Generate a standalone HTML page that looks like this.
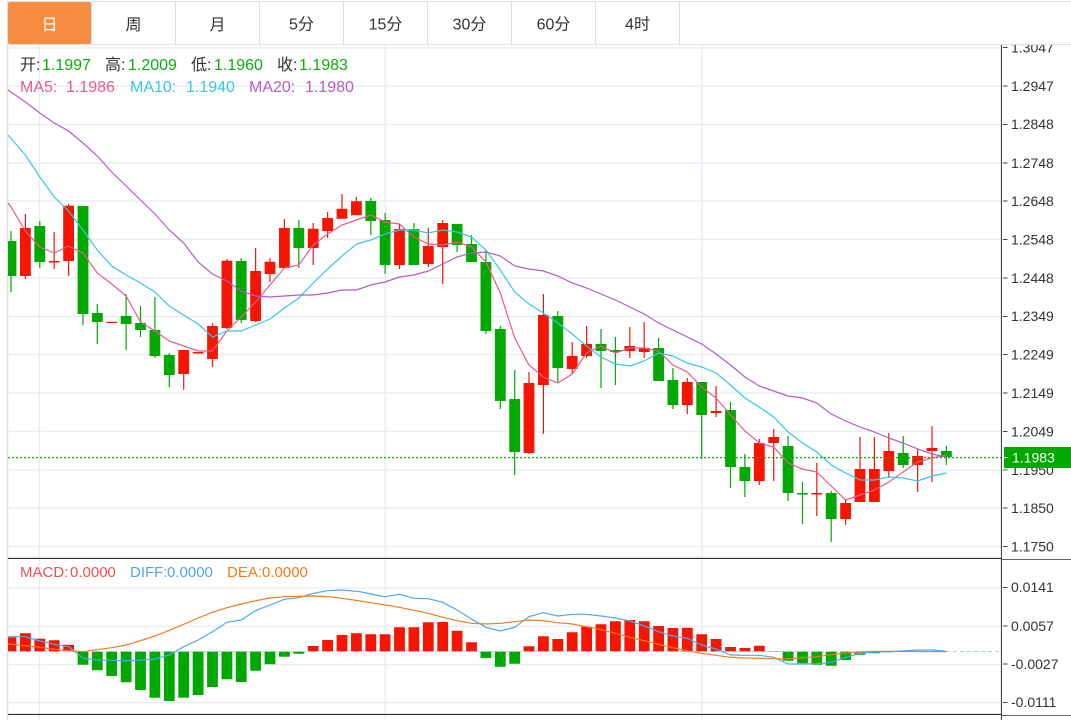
<!DOCTYPE html>
<html><head><meta charset="utf-8"><style>
html,body{margin:0;padding:0;background:#fff;width:1071px;height:720px;overflow:hidden}
svg{display:block;font-family:"Liberation Sans","Noto Sans CJK SC",sans-serif}
.ax{font-size:14px;fill:#333}
.tab{font-size:16px;fill:#333;text-anchor:middle}
.h{font-size:16px}
.m{font-size:15px}
</style></head><body>
<svg width="1071" height="720" viewBox="0 0 1071 720" xmlns="http://www.w3.org/2000/svg">
<defs><clipPath id="c"><rect x="8" y="45" width="993" height="675"/></clipPath></defs>
<rect width="1071" height="720" fill="#fff"/>
<!-- grid -->
<path d="M8 48H1001M8 86H1001M8 124.5H1001M8 163H1001M8 201H1001M8 239.5H1001M8 278H1001M8 316.5H1001M8 354.5H1001M8 393H1001M8 431.5H1001M8 470H1001M8 508H1001M8 546.5H1001M8 588H1001M8 626.5H1001M8 664.5H1001M8 702.5H1001" stroke="#e7eff5" stroke-width="1.4" fill="none"/>
<path d="M39.5 45V558M39.5 560V720M385.3 45V558M385.3 560V720M701.7 45V558M701.7 560V720" stroke="#e6eef4" stroke-width="1.4" fill="none"/>
<path d="M7.5 45V720" stroke="#e0e0e0" stroke-width="1.5"/>
<g clip-path="url(#c)">
<!-- wicks -->
<path fill="none" stroke="#f51500" stroke-width="1.2" d="M25.4 214V279M54.2 232V269M68.6 204V276M183.7 350V390M212.5 323V367M226.9 259V329M255.6 248V322M270 258V282M284.4 219V228M313.2 223V265M327.6 212V238M342 194V209M356.4 197V202M399.5 224V269M428.3 228V267M442.7 220V284M529 372V454M543.4 294V434M572.2 342V374M586.6 326V358M629.8 327V358M644.2 322V358M687.3 378V414M716.1 386V417M759.3 439V485M773.7 429V481M816.8 463V516M845.6 499V525M860 437V502M874.4 437V502M888.8 433V478M917.6 449V492M932 426V482"/>
<path fill="none" stroke="#00a800" stroke-width="1.2" d="M11 231V292M39.8 221V268M83 206V325M97.3 304V344M126.1 294V350M140.5 306V337M154.9 297V358M169.3 353V387M241.2 258V323M298.8 220V268M370.8 198V235M385.1 213V274M413.9 223V265M457.1 224V252M471.5 235V262M485.9 250V334M500.3 326V409M514.7 370V475M557.8 311V382M601 329V388M615.4 337V385M658.6 338V381M672.9 368V409M701.7 382V459M730.5 402V488M744.9 454V497M788.1 436V501M802.5 482V524M831.2 491V542M903.2 436V468M946.4 446V465"/>
<!-- red bodies -->
<path fill="#f51500" d="M20 228h10.8V276h-10.8zM48.8 261h10.8V262.5h-10.8zM63.2 205.7h10.8V261h-10.8zM106.3 321.7h10.8V323h-10.8zM178.3 350h10.8V374h-10.8zM192.7 352h10.8V353.5h-10.8zM207.1 326h10.8V359h-10.8zM221.5 260.7h10.8V328h-10.8zM250.2 271h10.8V321h-10.8zM264.6 261.7h10.8V274h-10.8zM279 228h10.8V268h-10.8zM307.8 228.7h10.8V248h-10.8zM322.2 218h10.8V231h-10.8zM336.6 208.7h10.8V218.7h-10.8zM351 201.3h10.8V215.3h-10.8zM394.1 229h10.8V265h-10.8zM422.9 246h10.8V264h-10.8zM437.3 223h10.8V247h-10.8zM523.6 383h10.8V453h-10.8zM538 315h10.8V385h-10.8zM566.8 356h10.8V369h-10.8zM581.2 344h10.8V356h-10.8zM624.4 346h10.8V351h-10.8zM638.8 348h10.8V352h-10.8zM681.9 382h10.8V405h-10.8zM710.7 411h10.8V413h-10.8zM753.9 443h10.8V481h-10.8zM768.3 437h10.8V443h-10.8zM811.4 493h10.8V494.5h-10.8zM840.2 503h10.8V519h-10.8zM854.6 469h10.8V502h-10.8zM869 469h10.8V502h-10.8zM883.4 451h10.8V471h-10.8zM912.2 456h10.8V465h-10.8zM926.6 448h10.8V451h-10.8z"/>
<!-- green bodies -->
<path fill="#00a800" d="M5.6 241h10.8V276h-10.8zM34.4 226h10.8V262h-10.8zM77.6 206h10.8V314h-10.8zM91.9 313h10.8V322h-10.8zM120.7 316h10.8V324h-10.8zM135.1 323h10.8V330h-10.8zM149.5 330h10.8V356h-10.8zM163.9 355h10.8V375h-10.8zM235.8 261h10.8V320h-10.8zM293.4 228h10.8V248h-10.8zM365.4 201h10.8V221h-10.8zM379.7 220h10.8V265h-10.8zM408.5 229h10.8V265h-10.8zM451.7 224h10.8V245h-10.8zM466.1 244h10.8V262h-10.8zM480.5 262h10.8V331h-10.8zM494.9 329h10.8V401h-10.8zM509.3 399h10.8V452h-10.8zM552.4 316h10.8V368h-10.8zM595.6 344h10.8V351h-10.8zM610 350h10.8V352h-10.8zM653.2 348h10.8V381h-10.8zM667.5 380h10.8V405h-10.8zM696.3 382h10.8V415h-10.8zM725.1 410h10.8V467h-10.8zM739.5 467h10.8V481h-10.8zM782.7 446h10.8V493h-10.8zM797.1 493h10.8V494.5h-10.8zM825.8 493h10.8V519h-10.8zM897.8 453h10.8V465h-10.8zM941 451h10.8V457h-10.8z"/>
<!-- MA lines -->
<polyline fill="none" stroke="#ec5a8a" stroke-width="1.2" points="8,203 11,207 25.4,231 39.8,247 54.2,253 68.6,246 83,253 97.3,273 111.7,284 126.1,296 140.5,322 154.9,331 169.3,341 183.7,346 198.1,351 212.5,351 226.9,331 241.2,317 255.6,302 270,285 284.4,268 298.8,265 313.2,245 327.6,234 342,225 356.4,220 370.8,215 385.1,222 399.5,224 413.9,237 428.3,244 442.7,245 457.1,242 471.5,247 485.9,262 500.3,293 514.7,338 529,365 543.4,377 557.8,383 572.2,374 586.6,353 601,346 615.4,353 629.8,348 644.2,348 658.6,351 672.9,365 687.3,372 701.7,387 716.1,398 730.5,415 744.9,431 759.3,443 773.7,447 788.1,463 802.5,469 816.8,472 831.2,486 845.6,500 860,495 874.4,490 888.8,482 903.2,472 917.6,462 932,458 946.4,455"/>
<polyline fill="none" stroke="#38c8e4" stroke-width="1.2" points="8,135 25.4,155 39.8,177 54.2,197 68.6,211 83,230 97.3,250 111.7,266 126.1,275 140.5,283 154.9,292 169.3,306 183.7,315 198.1,324 212.5,337 226.9,331 241.2,331 255.6,325 270,319 284.4,308 298.8,298 313.2,283 327.6,269 342,256 356.4,244 370.8,240 385.1,234 399.5,230 413.9,230 428.3,233 442.7,230 457.1,232 471.5,237 485.9,250 500.3,270 514.7,292 529,304 543.4,313 557.8,323 572.2,334 586.6,346 601,357 615.4,364 629.8,366 644.2,361 658.6,353 672.9,356 687.3,363 701.7,367 716.1,373 730.5,385 744.9,398 759.3,407 773.7,417 788.1,432 802.5,443 816.8,452 831.2,465 845.6,473 860,480 874.4,480 888.8,477 903.2,478 917.6,481 932,476 946.4,473"/>
<polyline fill="none" stroke="#b45cc8" stroke-width="1.2" points="8,90 25.4,102 39.8,113 54.2,123 68.6,131 83,143 97.3,156 111.7,172 126.1,186 140.5,200 154.9,214 169.3,230 183.7,243 198.1,262 212.5,274 226.9,281 241.2,291 255.6,296 270,297 284.4,296 298.8,295 313.2,295 327.6,293 342,290 356.4,290 370.8,285 385.1,282 399.5,277 413.9,275 428.3,271 442.7,264 457.1,257 471.5,253 485.9,252 500.3,256 514.7,266 529,269 543.4,271 557.8,276 572.2,283 586.6,288 601,294 615.4,300 629.8,307 644.2,314 658.6,323 672.9,330 687.3,337 701.7,344 716.1,354 730.5,365 744.9,377 759.3,386 773.7,391 788.1,396 802.5,398 816.8,403 831.2,414 845.6,421 860,427 874.4,432 888.8,438 903.2,443 917.6,449 932,454 946.4,457"/>
<!-- MACD bars -->
<path fill="#f51500" d="M5.6 637.3h10.8V651.5h-10.8zM20 633.3h10.8V651.5h-10.8zM34.4 638.7h10.8V651.5h-10.8zM48.8 640.3h10.8V651.5h-10.8zM63.2 644.7h10.8V651.5h-10.8zM307.8 646h10.8V651.5h-10.8zM322.2 640h10.8V651.5h-10.8zM336.6 635h10.8V651.5h-10.8zM351 633.3h10.8V651.5h-10.8zM365.4 634.3h10.8V651.5h-10.8zM379.7 634.3h10.8V651.5h-10.8zM394.1 627.3h10.8V651.5h-10.8zM408.5 627.3h10.8V651.5h-10.8zM422.9 622.3h10.8V651.5h-10.8zM437.3 622h10.8V651.5h-10.8zM451.7 630.7h10.8V651.5h-10.8zM466.1 642.3h10.8V651.5h-10.8zM523.6 646.3h10.8V651.5h-10.8zM538 636.3h10.8V651.5h-10.8zM552.4 639h10.8V651.5h-10.8zM566.8 632.3h10.8V651.5h-10.8zM581.2 626.7h10.8V651.5h-10.8zM595.6 624.3h10.8V651.5h-10.8zM610 621.3h10.8V651.5h-10.8zM624.4 620h10.8V651.5h-10.8zM638.8 621.3h10.8V651.5h-10.8zM653.2 626h10.8V651.5h-10.8zM667.5 628h10.8V651.5h-10.8zM681.9 627.7h10.8V651.5h-10.8zM696.3 634.3h10.8V651.5h-10.8zM710.7 639h10.8V651.5h-10.8zM725.1 647h10.8V651.5h-10.8zM739.5 648h10.8V651.5h-10.8zM753.9 645.7h10.8V651.5h-10.8zM768.3 651h10.8V651.5h-10.8z"/>
<path fill="#00a800" d="M77.6 651.5h10.8V664.7h-10.8zM91.9 651.5h10.8V670.3h-10.8zM106.3 651.5h10.8V676h-10.8zM120.7 651.5h10.8V682.3h-10.8zM135.1 651.5h10.8V690h-10.8zM149.5 651.5h10.8V697.7h-10.8zM163.9 651.5h10.8V701h-10.8zM178.3 651.5h10.8V697.7h-10.8zM192.7 651.5h10.8V695h-10.8zM207.1 651.5h10.8V687h-10.8zM221.5 651.5h10.8V679.3h-10.8zM235.8 651.5h10.8V682h-10.8zM250.2 651.5h10.8V670.7h-10.8zM264.6 651.5h10.8V664.3h-10.8zM279 651.5h10.8V656.7h-10.8zM293.4 651.5h10.8V653.7h-10.8zM480.5 651.5h10.8V658h-10.8zM494.9 651.5h10.8V666.7h-10.8zM509.3 651.5h10.8V663.7h-10.8zM782.7 651.5h10.8V660.7h-10.8zM797.1 651.5h10.8V663.3h-10.8zM811.4 651.5h10.8V664.7h-10.8zM825.8 651.5h10.8V665.7h-10.8zM840.2 651.5h10.8V660h-10.8zM854.6 651.5h10.8V654.7h-10.8zM869 651.5h10.8V653.3h-10.8zM883.4 651.5h10.8V652.3h-10.8z"/>
<path d="M8 651.5H1001" stroke="#9fd8ee" stroke-dasharray="4 3" stroke-width="1" fill="none"/>
<!-- DIFF / DEA -->
<polyline fill="none" stroke="#4ea8f0" stroke-width="1.2" points="8,636.7 25.4,636.7 39.8,641 54.2,644.3 68.6,646.7 83,658.3 97.3,660 111.7,660.3 126.1,660.7 140.5,660.3 154.9,659 169.3,655 183.7,646.7 198.1,640 212.5,631.7 226.9,622.3 241.2,620 255.6,610.7 270,605 284.4,599.3 298.8,597.7 313.2,593.3 327.6,590.7 342,590 360,591.7 370.8,594 385.1,596.7 399.5,594.3 413.9,598.3 428.3,598.7 442.7,602.3 457.1,610 471.5,619 485.9,627.3 500.3,631 514.7,627.3 529,616.7 543.4,612.7 557.8,616 572.2,614.3 586.6,614.3 601,616 615.4,618 629.8,621 644.2,626 658.6,631.7 672.9,636 687.3,638.3 701.7,645 716.1,649 730.5,655 744.9,655.3 759.3,655.3 773.7,657.3 788.1,664 802.5,664 816.8,663.7 831.2,662.3 845.6,657.3 860,653.3 874.4,652 888.8,651.7 917.6,650 932,650 946.4,651.3"/>
<polyline fill="none" stroke="#f57a1e" stroke-width="1.2" points="8,644 25.4,645.7 39.8,647.3 54.2,649.3 68.6,650.7 83,651.7 97.3,649.7 111.7,647.7 126.1,645 140.5,640.7 154.9,636 169.3,630.3 183.7,624.3 198.1,618 212.5,612.3 226.9,607.7 241.2,604 255.6,600.7 270,598 284.4,596.7 298.8,596.3 313.2,596 327.6,596.7 342,598.3 360,601 370.8,602.7 385.1,605 399.5,607.3 413.9,610.3 428.3,613.3 442.7,617.3 457.1,620.7 471.5,623.3 485.9,624 500.3,623.3 514.7,621.7 529,620 543.4,620.7 557.8,622.7 572.2,624 586.6,626.7 601,629.7 615.4,633.3 629.8,637.3 644.2,640.7 658.6,644.3 672.9,647.7 687.3,650.7 701.7,653.3 716.1,655.3 730.5,657.3 744.9,658 759.3,658.3 773.7,658.7 788.1,659 802.5,657.7 816.8,656.7 831.2,654.7 845.6,653 860,652 874.4,651.3 946.4,651.7"/>
</g>
<!-- dotted price line, bright green and above candles -->
<path d="M8 457.6H1001" stroke="#00b000" stroke-dasharray="2 2" stroke-width="1.2" fill="none"/>
<!-- panel lines -->
<path d="M8 558.4H1001M8 714.4H1001" stroke="#111" stroke-width="1"/>
<path d="M1001.5 559.5H1071M1001.5 715.5H1071" stroke="#666" stroke-width="1"/>
<path d="M1001.4 45V720" stroke="#333" stroke-width="1"/>
<!-- axis ticks -->
<path d="M1003 47.5h4.5M1003 86h4.5M1003 124.5h4.5M1003 163h4.5M1003 201h4.5M1003 239.5h4.5M1003 278h4.5M1003 316.5h4.5M1003 354.5h4.5M1003 393h4.5M1003 431.5h4.5M1003 470h4.5M1003 508h4.5M1003 546.5h4.5M1003 587.5h4.5M1003 626h4.5M1003 664h4.5M1003 702.5h4.5" stroke="#444" stroke-width="1"/>
<g class="ax">
<text x="1011" y="52.5">1.3047</text><text x="1011" y="91">1.2947</text><text x="1011" y="129">1.2848</text><text x="1011" y="168">1.2748</text><text x="1011" y="206">1.2648</text><text x="1011" y="244.5">1.2548</text><text x="1011" y="283">1.2448</text><text x="1011" y="321">1.2349</text><text x="1011" y="359.5">1.2249</text><text x="1011" y="398">1.2149</text><text x="1011" y="436.5">1.2049</text><text x="1011" y="475">1.1950</text><text x="1011" y="513">1.1850</text><text x="1011" y="551.5">1.1750</text>
<text x="1011" y="592">0.0141</text><text x="1011" y="631">0.0057</text><text x="1011" y="669">-0.0027</text><text x="1011" y="707">-0.0111</text>
</g>
<!-- price tag -->
<rect x="1004" y="447" width="67" height="21" fill="#00a800"/>
<path d="M1003 457.5h5" stroke="#fff" stroke-width="1"/>
<text x="1012" y="462.5" font-size="14" fill="#fff">1.1983</text>
<!-- tab bar -->
<rect x="0" y="0" width="1071" height="44.5" fill="#fff"/>
<path d="M7 1.5H1071M7 44.5H1071" stroke="#e0e0e0" stroke-width="1"/>
<path d="M7.5 1V45M91.5 2V44M175.5 2V44M259.5 2V44M343.5 2V44M427.5 2V44M511.5 2V44M595.5 2V44M679.5 2V44" stroke="#dedede" stroke-width="1"/>
<rect x="8" y="2" width="83" height="42" rx="2" fill="#f68d42"/>
<text class="tab" x="49.5" y="30" style="fill:#fff">日</text>
<text class="tab" x="133.5" y="30">周</text>
<text class="tab" x="217.5" y="30">月</text>
<text class="tab" x="301.5" y="29.5">5分</text>
<text class="tab" x="385.5" y="29.5">15分</text>
<text class="tab" x="469.5" y="29.5">30分</text>
<text class="tab" x="553.5" y="29.5">60分</text>
<text class="tab" x="637.5" y="29.5">4时</text>
<!-- header text -->
<g class="h">
<text x="20" y="70" fill="#333">开:</text><text x="42" y="70" fill="#0cae0c">1.1997</text>
<text x="105" y="70" fill="#333">高:</text><text x="128" y="70" fill="#0cae0c">1.2009</text>
<text x="191" y="70" fill="#333">低:</text><text x="214" y="70" fill="#0cae0c">1.1960</text>
<text x="277" y="70" fill="#333">收:</text><text x="299" y="70" fill="#0cae0c">1.1983</text>
<text x="20" y="92" fill="#ec5a8a">MA5:</text><text x="66" y="92" fill="#ec5a8a">1.1986</text>
<text x="130" y="92" fill="#38c8e4">MA10:</text><text x="186" y="92" fill="#38c8e4">1.1940</text>
<text x="249" y="92" fill="#b45cc8">MA20:</text><text x="305" y="92" fill="#b45cc8">1.1980</text>
</g>
<g class="m">
<text x="20" y="577" fill="#f05050">MACD:</text><text x="70" y="577" fill="#f05050">0.0000</text>
<text x="130" y="577" fill="#4ea8f0">DIFF:</text><text x="167" y="577" fill="#4ea8f0">0.0000</text>
<text x="227" y="577" fill="#f57a1e">DEA:</text><text x="262" y="577" fill="#f57a1e">0.0000</text>
</g>
</svg>
</body></html>
